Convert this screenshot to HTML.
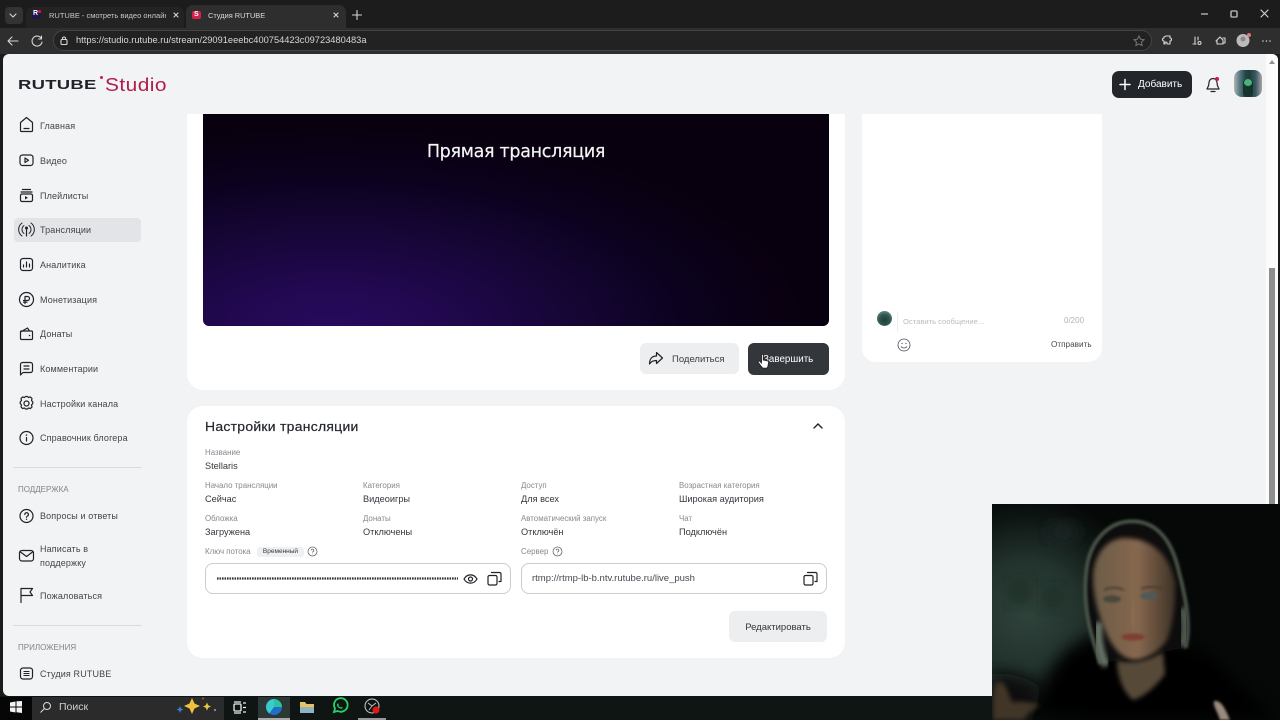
<!DOCTYPE html>
<html lang="ru"><head><meta charset="utf-8"><title>Студия RUTUBE</title>
<style>
*{box-sizing:border-box;margin:0;padding:0}
html,body{width:1280px;height:720px;overflow:hidden;background:#1b1b1b}
body{position:relative;font-family:"Liberation Sans","Noto Sans CJK SC",sans-serif;color:#22262b}
.a{position:absolute;white-space:nowrap}
svg{position:absolute;overflow:visible}
.i{fill:none;stroke:#1f2328;stroke-width:1.2;stroke-linecap:round;stroke-linejoin:round}
.nav{font-size:9px;color:#41464c;letter-spacing:.14px;line-height:12px}
.lb{font-size:7.900px;color:#85898f;line-height:10px}
.v{font-size:9.200px;color:#33383d;line-height:12px}
.w{fill:none;stroke:#d6d6d6;stroke-width:1.1;stroke-linecap:round;stroke-linejoin:round}
</style></head><body>

<!-- browser chrome -->
<div class="a" style="left:0;top:0;width:1280px;height:28px;background:#1c1c1c"></div>
<div class="a" style="left:0;top:28px;width:1280px;height:26px;background:#2e2e2e"></div>
<div class="a" style="left:5px;top:7px;width:18px;height:17px;background:#333;border-radius:4px"></div>
<svg style="left:0;top:0" width="30" height="28"><path d="M10 14l3 3 3-3" class="w"/></svg>
<div class="a" style="left:26px;top:7px;width:158px;height:21px;background:#232323;border-radius:6px 6px 0 0"></div>
<div class="a" style="left:32px;top:11px;width:8px;height:8px;background:#1d1650;border-radius:2px"></div>
<div class="a" style="left:33px;top:10px;font:bold 7px 'Liberation Sans';color:#fff">R</div>
<div class="a" style="left:38px;top:10px;width:3px;height:3px;background:#e0164f;border-radius:50%"></div>
<div class="a" style="left:49px;top:10px;width:117px;overflow:hidden;font-size:7.500px;line-height:11px;color:#c8c8c8">RUTUBE - смотреть видео онлайн</div>
<svg style="left:0;top:0" width="345" height="28"><path d="M174 13l4 4m0-4l-4 4" class="w"/><path d="M357 10.500v9M352.500 15h9" class="w"/></svg>
<div class="a" style="left:186px;top:5px;width:160px;height:23px;background:#2e2e2e;border-radius:7px 7px 0 0"></div>
<div class="a" style="left:192px;top:11px;width:9px;height:8px;background:#d3214f;border-radius:2px"></div>
<div class="a" style="left:194px;top:10.500px;font:bold 7px 'Liberation Sans';color:#fff">S</div>
<div class="a" style="left:208px;top:10px;font-size:7.400px;line-height:11px;color:#dcdcdc">Студия RUTUBE</div>
<svg style="left:0;top:0" width="345" height="28"><path d="M334 13l4 4m0-4l-4 4" class="w"/></svg>
<svg style="left:0;top:28px" width="70" height="26"><path d="M8 13h10M8 13l4-4M8 13l4 4" class="w"/><path d="M41 10a5 5 0 1 0 1 4M41.500 8v3h-3" class="w"/></svg>
<div class="a" style="left:53px;top:30px;width:1099px;height:21px;background:#222;border:1px solid #444;border-radius:11px"></div>
<svg style="left:60px;top:36px" width="10" height="10"><rect x="1" y="3.500" width="6" height="5" rx="1" class="w"/><path d="M2.500 3.500v-1a1.500 1.500 0 0 1 3 0v1" class="w"/></svg>
<div class="a" style="left:76px;top:34px;font-size:9.300px;line-height:13px;color:#d8d8d8">https://studio.rutube.ru/stream/29091eeebc400754423c09723480483a</div>
<svg style="left:1130px;top:0" width="150" height="54">
<path d="M9 36l1.600 3.200 3.400.5-2.500 2.400.6 3.400-3.100-1.600-3.100 1.600.6-3.400-2.500-2.400 3.400-.5z" style="fill:none;stroke:#777;stroke-width:1"/>
<path d="M36 36h4v2a1.500 1.500 0 0 1 0 3v3h-3v-1.500a1.500 1.500 0 0 0-2 0V44h-1v-3a1.500 1.500 0 0 1 0-3v-1z" class="w"/>
<path d="M65 37v6M68 37v3M63 44h3" class="w"/><circle cx="69.500" cy="43" r="1.500" class="w"/>
<path d="M86 41l4-4 3 3v4h-6v-3zM93 38h2v5h-2" class="w"/>
<circle cx="113" cy="40.500" r="6.500" fill="#bbb"/><circle cx="113" cy="39" r="2.500" fill="#888"/><circle cx="119" cy="35" r="2" fill="#d87a80"/>
<circle cx="133" cy="41" r=".8" fill="#ccc"/><circle cx="136.500" cy="41" r=".8" fill="#ccc"/><circle cx="140" cy="41" r=".8" fill="#ccc"/>
<path d="M71 14h7" style="stroke:#ddd;stroke-width:1.100"/><rect x="101" y="11" width="6" height="6" rx="1" style="fill:none;stroke:#aaa;stroke-width:1.600"/><path d="M131 10l7 7m0-7l-7 7" class="w"/>
</svg>

<!-- page -->
<div class="a" style="left:3px;top:54px;width:1275px;height:642px;background:#f2f3f5;border-radius:6px;overflow:hidden"></div>
<div class="a" style="left:1266px;top:54px;width:12px;height:450px;background:#fbfbfb;border-radius:0 6px 0 0"></div>
<svg style="left:1269px;top:59px" width="8" height="6"><path d="M3 1l3 4H0z" fill="#8f8f8f"/></svg>
<div class="a" style="left:1269px;top:268px;width:6px;height:236px;background:#8e8e8e"></div>

<!-- logo -->
<div class="a" style="left:18px;top:76px;font:bold 13px/18px 'Liberation Sans';color:#1f2328;letter-spacing:.2px;transform:scaleX(1.42);transform-origin:left">RUTUBE</div>
<div class="a" style="left:100px;top:76px;width:3px;height:3px;border-radius:50%;background:#d5144f"></div>
<div class="a" style="left:105px;top:75px;font:18px/21px 'Liberation Sans';color:#b01c4b;letter-spacing:.4px;transform:scaleX(1.16);transform-origin:left">Studio</div>

<!-- header right -->
<div class="a" style="left:1112px;top:71px;width:80px;height:27px;background:#22262b;border-radius:7px"></div>
<svg style="left:1112px;top:71px" width="80" height="27"><path d="M13 8.500v10M8 13.500h10" stroke="#fff" stroke-width="1.500" stroke-linecap="round"/></svg>
<div class="a" style="left:1138px;top:78px;font-size:10px;line-height:14px;color:#fff">Добавить</div>
<svg style="left:1205px;top:76px" width="16" height="18"><path d="M8 2.500a4 4 0 0 0-4 4c0 4-1.500 5-2 6.500h12c-.5-1.500-2-2.500-2-6.500a4 4 0 0 0-4-4zM6 15.500h4" class="i"/><circle cx="12" cy="3" r="2" fill="#d5144f"/></svg>
<div class="a" style="left:1234px;top:70px;width:28px;height:27px;border-radius:8px;background:linear-gradient(90deg,#b5b3ad 0,#5e7f88 18%,#27474a 40%,#1f3c38 55%,#3a5a66 78%,#a9a6a0 100%);overflow:hidden"><div class="a" style="left:9px;top:9px;width:10px;height:18px;background:#17342a;border-radius:4px"></div><div class="a" style="left:10px;top:9px;width:8px;height:7px;background:#47b27c;border-radius:50%"></div></div>

<!-- sidebar -->
<div class="a" style="left:14px;top:218px;width:127px;height:24px;background:#e2e4e7;border-radius:4px"></div>
<svg style="left:0;top:0" width="40" height="690">
<path class="i" d="M20.500 122.500l6-5 6 5v8a1 1 0 0 1-1 1h-10a1 1 0 0 1-1-1zM24 128.500h5"/>
<rect class="i" x="20" y="155" width="13" height="10.500" rx="2.500"/><path class="i" d="M25 158v4.500l3.500-2.200z"/>
<path class="i" d="M22.500 189.500h8M21 192h11"/><rect class="i" x="20.500" y="194" width="12" height="7.500" rx="1.500"/><path d="M25 196v3.500l3-1.700z" fill="#1f2328"/>
<path class="i" d="M24 225.500a5 5 0 0 0 0 8M29 225.500a5 5 0 0 1 0 8M22 223a8 8 0 0 0 0 13M31 223a8 8 0 0 1 0 13" style="stroke-width:1"/><path class="i" d="M26.500 229v7"/><circle cx="26.500" cy="228" r="1.500" fill="#1f2328"/>
<rect class="i" x="20.500" y="258.500" width="12" height="12" rx="2.500"/><path class="i" d="M23.500 267v-2M26.500 267v-5M29.500 267v-3"/>
<circle class="i" cx="26.500" cy="299.500" r="7"/><path class="i" d="M25 303.500v-7h2.500a2 2 0 0 1 0 4H23.500M23.500 302.200h3.500"/>
<path class="i" d="M20.500 332v6.500a1 1 0 0 0 1 1h10a1 1 0 0 0 1-1V332a1 1 0 0 0-1-1h-10a1 1 0 0 0-1 1l7-4 2 3"/><circle cx="29.500" cy="335.500" r=".8" fill="#1f2328"/>
<path class="i" d="M20.500 364.500a2 2 0 0 1 2-2h8a2 2 0 0 1 2 2v6a2 2 0 0 1-2 2h-7.500l-2.500 2.500zM24 366h5M24 369h5"/>
<circle class="i" cx="26.500" cy="403.500" r="2.500"/><path class="i" d="M24.500 397.500l1-1h2l1 1 2-.5 1.500 1.500-.5 2 1.300 1.500v1.500l-1.300 1.500.5 2-1.500 1.500-2-.5-1 1h-2l-1-1-2 .5-1.500-1.500.5-2-1.300-1.500v-1.500l1.300-1.500-.5-2 1.500-1.500z"/>
<circle class="i" cx="26.500" cy="438" r="6.500"/><path class="i" d="M26.500 437.500v3.500"/><circle cx="26.500" cy="435" r=".8" fill="#1f2328"/>
<circle class="i" cx="26.500" cy="516" r="6.500"/><path class="i" d="M24.800 514.500a1.800 1.800 0 1 1 2.600 1.600c-.6.300-.9.700-.9 1.200"/><circle cx="26.500" cy="519.300" r=".7" fill="#1f2328"/>
<rect class="i" x="19.500" y="550.500" width="14" height="10.500" rx="2.500"/><path class="i" d="M20.500 552l6 4.500 6-4.500"/>
<path class="i" d="M21 602.500v-14h11.500l-2.500 3.500 2.500 3.500H21"/>
<rect class="i" x="20.500" y="668" width="12" height="11" rx="2.500"/><path d="M23.500 671.500h6M23.500 673.500h6M23.500 675.500h6" stroke="#1f2328" stroke-width="1"/>
</svg>
<div class="a nav" style="left:40px;top:120px">Главная</div>
<div class="a nav" style="left:40px;top:155px">Видео</div>
<div class="a nav" style="left:40px;top:190px">Плейлисты</div>
<div class="a nav" style="left:40px;top:224px">Трансляции</div>
<div class="a nav" style="left:40px;top:259px">Аналитика</div>
<div class="a nav" style="left:40px;top:294px">Монетизация</div>
<div class="a nav" style="left:40px;top:328px">Донаты</div>
<div class="a nav" style="left:40px;top:363px">Комментарии</div>
<div class="a nav" style="left:40px;top:398px">Настройки канала</div>
<div class="a nav" style="left:40px;top:432px">Справочник блогера</div>
<div class="a" style="left:13px;top:467px;width:129px;height:1px;background:#d9dbde"></div>
<div class="a" style="left:18px;top:485px;font-size:8px;line-height:10px;color:#7e848a">ПОДДЕРЖКА</div>
<div class="a nav" style="left:40px;top:510px">Вопросы и ответы</div>
<div class="a nav" style="left:40px;top:543px;line-height:13.500px">Написать в<br>поддержку</div>
<div class="a nav" style="left:40px;top:590px">Пожаловаться</div>
<div class="a" style="left:13px;top:625px;width:129px;height:1px;background:#d9dbde"></div>
<div class="a" style="left:18px;top:643px;font-size:8px;line-height:10px;color:#7e848a">ПРИЛОЖЕНИЯ</div>
<div class="a nav" style="left:40px;top:668px">Студия RUTUBE</div>

<!-- main card -->
<div class="a" style="left:187px;top:114px;width:658px;height:276px;background:#fff;border-radius:0 0 16px 16px"></div>
<div class="a" style="left:203px;top:114px;width:626px;height:212px;border-radius:0 0 6px 6px;background:radial-gradient(ellipse 470px 200px at 130px 215px,#270a5e 0,#220850 22%,#170638 48%,#0c0220 74%,rgba(9,0,19,0) 100%),#09000f"></div>
<div class="a" style="left:203px;top:142px;width:626px;text-align:center;font:17.500px/20px 'DejaVu Sans','Liberation Sans',sans-serif;color:#f5f5f5;letter-spacing:-.3px;-webkit-text-stroke:.2px #f5f5f5"><span style="display:inline-block;transform:scaleX(1)">Прямая трансляция</span></div>
<div class="a" style="left:640px;top:343px;width:99px;height:31px;background:#eceef0;border-radius:6px"></div>
<svg style="left:648px;top:351px" width="16" height="15"><path class="i" d="M8.500 1.500l6 5.500-6 5.500V9.500C5 9.500 3 10.500 1.500 13c0-4.500 2-8 7-8z"/></svg>
<div class="a" style="left:672px;top:353px;font-size:9.500px;line-height:13px;color:#3a3f45">Поделиться</div>
<div class="a" style="left:748px;top:343px;width:81px;height:32px;background:#33363b;border-radius:6px"></div>
<div class="a" style="left:763px;top:353px;font-size:9.800px;line-height:13px;color:#fff">Завершить</div>
<svg style="left:757px;top:353px" width="13" height="17"><path d="M4.500 2.200c0-1.300 1.800-1.300 1.800 0V7l4 .8c1 .2 1.500 1 1.300 2l-.8 4c-.2.900-.8 1.400-1.700 1.400H6.500c-.7 0-1.200-.3-1.600-.9L1.300 9.500c-.8-1.100.6-2.200 1.500-1.200l1.700 1.600z" fill="#fff" stroke="#222" stroke-width=".9"/></svg>

<!-- chat card -->
<div class="a" style="left:862px;top:114px;width:240px;height:248px;background:#fff;border-radius:0 0 14px 14px"></div>
<div class="a" style="left:877px;top:311px;width:15px;height:15px;border-radius:50%;background:radial-gradient(circle at 50% 60%,#213d37 0,#2f5751 45%,#8aa5a1 100%)"></div>
<div class="a" style="left:897px;top:312px;width:1px;height:20px;background:#eceef0"></div>
<div class="a" style="left:903px;top:317px;font-size:7.600px;line-height:10px;color:#b9bdc2">Оставить сообщение...</div>
<div class="a" style="left:1064px;top:316px;font-size:8px;line-height:10px;color:#b0b4b9">0/200</div>
<svg style="left:897px;top:338px" width="14" height="14"><circle cx="7" cy="7" r="6" fill="none" stroke="#44494f" stroke-width=".8"/><circle cx="5" cy="5.500" r=".6" fill="#44494f"/><circle cx="9" cy="5.500" r=".6" fill="#44494f"/><path d="M4 8.500c1.500 2 4.500 2 6 0" fill="none" stroke="#44494f" stroke-width=".8"/></svg>
<div class="a" style="left:1051px;top:339px;font-size:8.200px;line-height:12px;color:#44494f">Отправить</div>

<!-- settings card -->
<div class="a" style="left:187px;top:406px;width:658px;height:252px;background:#fff;border-radius:16px"></div>
<div class="a" style="left:205px;top:420px;font-size:12.500px;line-height:15px;color:#22262b;letter-spacing:.25px;-webkit-text-stroke:.2px #22262b;transform:scaleX(1.115);transform-origin:left">Настройки трансляции</div>
<svg style="left:812px;top:421px" width="12" height="10"><path d="M2 7l4-4 4 4" fill="none" stroke="#1f2328" stroke-width="1.400" stroke-linecap="round"/></svg>

<div class="a lb" style="left:205px;top:448px">Название</div><div class="a v" style="left:205px;top:460px">Stellaris</div>
<div class="a lb" style="left:205px;top:481px">Начало трансляции</div><div class="a v" style="left:205px;top:493px">Сейчас</div>
<div class="a lb" style="left:363px;top:481px">Категория</div><div class="a v" style="left:363px;top:493px">Видеоигры</div>
<div class="a lb" style="left:521px;top:481px">Доступ</div><div class="a v" style="left:521px;top:493px">Для всех</div>
<div class="a lb" style="left:679px;top:481px">Возрастная категория</div><div class="a v" style="left:679px;top:493px">Широкая аудитория</div>
<div class="a lb" style="left:205px;top:514px">Обложка</div><div class="a v" style="left:205px;top:526px">Загружена</div>
<div class="a lb" style="left:363px;top:514px">Донаты</div><div class="a v" style="left:363px;top:526px">Отключены</div>
<div class="a lb" style="left:521px;top:514px">Автоматический запуск</div><div class="a v" style="left:521px;top:526px">Отключён</div>
<div class="a lb" style="left:679px;top:514px">Чат</div><div class="a v" style="left:679px;top:526px">Подключён</div>
<div class="a lb" style="left:205px;top:547px">Ключ потока</div>
<div class="a" style="left:257px;top:547px;width:47px;height:10px;background:#eff0f2;border-radius:3px;font-size:6.500px;line-height:10px;text-align:center;color:#33383d">Временный</div>
<svg style="left:307px;top:546px" width="11" height="11"><circle cx="5.500" cy="5.500" r="4.500" fill="none" stroke="#666" stroke-width=".8"/><path d="M4.200 4.400a1.300 1.300 0 1 1 1.900 1.200c-.4.200-.6.500-.6.900" fill="none" stroke="#666" stroke-width=".8"/><circle cx="5.500" cy="8" r=".4" fill="#666"/></svg>
<div class="a lb" style="left:521px;top:547px">Сервер</div>
<svg style="left:552px;top:546px" width="11" height="11"><circle cx="5.500" cy="5.500" r="4.500" fill="none" stroke="#666" stroke-width=".8"/><path d="M4.200 4.400a1.300 1.300 0 1 1 1.900 1.200c-.4.200-.6.500-.6.900" fill="none" stroke="#666" stroke-width=".8"/><circle cx="5.500" cy="8" r=".4" fill="#666"/></svg>

<div class="a" style="left:205px;top:563px;width:306px;height:31px;border:1px solid #c9ccd0;border-radius:8px"></div>
<svg style="left:216px;top:577px" width="243" height="3"><line x1="1" y1="1.500" x2="242" y2="1.500" stroke="#2f3338" stroke-width="2.300" stroke-dasharray="1.600 .9"/></svg>
<svg style="left:463px;top:572px" width="15" height="14"><path class="i" d="M1 7c3-5.500 10-5.500 13 0-3 5.500-10 5.500-13 0z"/><circle class="i" cx="7.500" cy="7" r="2"/></svg>
<svg style="left:487px;top:571px" width="15" height="15"><rect class="i" x="1" y="4.500" width="9" height="9.500" rx="1.500"/><path class="i" d="M4.500 1.500h8a1.500 1.500 0 0 1 1.500 1.500v7.500h-2"/></svg>
<div class="a" style="left:521px;top:563px;width:306px;height:31px;border:1px solid #c9ccd0;border-radius:8px"></div>
<div class="a" style="left:532px;top:573px;font-size:9.500px;line-height:12px;color:#44494f">rtmp://rtmp-lb-b.ntv.rutube.ru/live_push</div>
<svg style="left:803px;top:571px" width="15" height="15"><rect class="i" x="1" y="4.500" width="9" height="9.500" rx="1.500"/><path class="i" d="M4.500 1.500h8a1.500 1.500 0 0 1 1.500 1.500v7.500h-2"/></svg>
<div class="a" style="left:729px;top:611px;width:98px;height:31px;background:#eceef0;border-radius:6px;font-size:9.500px;line-height:31px;padding-top:1px;text-align:center;color:#33383d">Редактировать</div>

<!-- taskbar -->
<div class="a" style="left:0;top:696px;width:1280px;height:24px;background:#0f1513"></div>
<div class="a" style="left:0;top:697px;width:32px;height:23px;background:#060606"></div>
<svg style="left:10px;top:701px" width="13" height="12"><path d="M0 1.500l5.500-1V5.500H0zM6.500.3L12 0v5.500H6.500zM0 6.500h5.500v5L0 10.500zM6.500 6.500H12V12l-5.500-.8z" fill="#f2f2f2"/></svg>
<div class="a" style="left:32px;top:697px;width:192px;height:23px;background:#2b2b2b"></div>
<svg style="left:39px;top:701px" width="14" height="13"><circle cx="8" cy="5" r="3.500" fill="none" stroke="#ddd" stroke-width="1"/><path d="M5.500 7.500L1.500 11.500" stroke="#ddd" stroke-width="1"/></svg>
<div class="a" style="left:59px;top:700px;font-size:10.500px;line-height:14px;color:#cfcfcf">Поиск</div>
<svg style="left:176px;top:697px" width="44" height="20"><path d="M16 1l2.500 5.500L24 9l-5.500 2.500L16 17l-2.500-5.500L8 9l5.500-2.500z" fill="#eec23c"/><path d="M31 5.500l1.200 2.800 2.800 1.200-2.800 1.200L31 13.500l-1.200-2.800L27 9.500l2.800-1.200z" fill="#e7c83f"/><path d="M4 9l1 2.500L7.500 12.500 5 13.500 4 16l-1-2.500L.5 12.500 3 11.500z" fill="#3c7fd0"/><circle cx="39" cy="13" r="1" fill="#9aa"/><circle cx="27" cy="1.500" r="1" fill="#c0502a"/></svg>
<svg style="left:233px;top:701px" width="14" height="13"><rect x="1" y="3" width="7" height="7" rx="1" fill="none" stroke="#eee" stroke-width="1.300"/><path d="M10 2h3M10 6.500h3M10 11h3M1 1h7M1 12h7" stroke="#eee" stroke-width="1.300"/></svg>
<div class="a" style="left:258px;top:697px;width:32px;height:23px;background:#2c3836"></div>
<div class="a" style="left:266px;top:699px;width:16px;height:16px;border-radius:50%;background:conic-gradient(#2dc3a0 0 25%,#1f6fc9 25% 60%,#3acad0 60% 100%)"></div>
<svg style="left:299px;top:699px" width="16" height="16"><path d="M1 3h5l1.500 2H15v9H1z" fill="#e7c45f"/><rect x="1" y="8" width="14" height="6" fill="#8fb3c5"/></svg>
<svg style="left:331px;top:698px" width="17" height="17"><path d="M3 14l1-3.500a6.800 6.800 0 1 1 2.700 2.500z" fill="none" stroke="#25d366" stroke-width="1.800"/><path d="M6.300 6c.5-1 1-.9 1.400.3.200.7-.6.800-.3 1.300.5.800 1.300 1.500 2 1.800.4.200.7-.7 1.300-.4 1.200.5 1.300 1 .3 1.500-2.300 1-6.300-2.500-4.700-4.500z" fill="#25d366"/></svg>
<svg style="left:363px;top:697px" width="20" height="20"><circle cx="9" cy="9" r="7" fill="none" stroke="#cfcfcf" stroke-width="1"/><path d="M5 6l4 3-3 4M9 9l4-3" fill="none" stroke="#cfcfcf" stroke-width=".8"/><circle cx="13" cy="13" r="3.500" fill="#e01818"/></svg>
<div class="a" style="left:358px;top:718px;width:28px;height:2px;background:#999"></div>
<div class="a" style="left:258px;top:718px;width:32px;height:2px;background:#aaa"></div>

<!-- webcam -->
<div class="a" style="left:992px;top:504px;width:288px;height:216px;background:#050706;overflow:hidden">
<svg style="left:0;top:0;overflow:hidden" width="288" height="216" viewBox="0 0 288 216">
<defs>
<filter id="b" x="-30%" y="-30%" width="160%" height="160%"><feGaussianBlur stdDeviation="2.500"/></filter>
<filter id="e" x="-30%" y="-30%" width="160%" height="160%"><feGaussianBlur stdDeviation="8"/></filter>
<filter id="d" x="-50%" y="-50%" width="200%" height="200%"><feGaussianBlur stdDeviation="1.300"/></filter>
<radialGradient id="g" gradientUnits="userSpaceOnUse" cx="35" cy="110" r="120"><stop offset="0" stop-color="#2f433b"/><stop offset=".45" stop-color="#22322c"/><stop offset=".85" stop-color="#0b1210"/><stop offset="1" stop-color="#060808"/></radialGradient>
<linearGradient id="f" x1="0" y1="0" x2="1" y2="0"><stop offset="0" stop-color="#6b5c46"/><stop offset=".55" stop-color="#86674f"/><stop offset="1" stop-color="#3c3226"/></linearGradient>
</defs>
<rect width="288" height="216" fill="url(#g)"/>
<ellipse cx="71" cy="28" rx="16" ry="9" fill="#1d2825" filter="url(#e)"/>
<ellipse cx="28" cy="88" rx="11" ry="13" fill="#1f2d28" filter="url(#e)"/>
<ellipse cx="60" cy="94" rx="10" ry="12" fill="#1f2d28" filter="url(#e)"/>
<path d="M40 216C55 160 75 135 112 130L210 145C240 170 260 190 288 216z" fill="#040505" filter="url(#e)"/>
<path d="M0 216V170c20-2 35 4 50 14l-10 32z" fill="#0c100e" filter="url(#e)"/>
<path d="M108 160C100 135 90 105 94 68 97 35 118 17 140 17c24 0 40 18 47 50 8 30 12 55 7 77" fill="#070807" stroke="#4f5a4e" stroke-width="3" filter="url(#d)"/>
<path d="M114 162c-6-14-9-26-7-44" fill="none" stroke="#69746a" stroke-width="8" filter="url(#b)"/>
<path d="M190 142c4-12 4-24 0-38" fill="none" stroke="#4f5c50" stroke-width="8" filter="url(#b)"/>
<path d="M101 72c1-22 14-38 32-38 26 0 44 16 50 44 1 20-2 42-8 58-10 14-22 20-34 20-14-2-24-18-30-34-6-16-10-32-10-50z" fill="url(#f)" filter="url(#b)"/>
<path d="M125 156c12 4 28 2 46-8l2 22c-6 8-18 22-32 26-10-8-16-24-16-40z" fill="#574a37" filter="url(#b)"/>
<ellipse cx="120" cy="95" rx="9" ry="3.500" fill="#46463a" filter="url(#d)"/><ellipse cx="157" cy="92" rx="9" ry="3.500" fill="#4d5a58" filter="url(#d)"/>
<path d="M112 86c6-3 13-3 20 0M149 85c7-3 15-3 22 0" stroke="#4a3e2d" stroke-width="2" fill="none" filter="url(#d)"/>
<path d="M141 100c1 8 1 14-1 22" stroke="#9c7a60" stroke-width="7" fill="none" filter="url(#e)"/>
<ellipse cx="141" cy="133" rx="12" ry="3.500" fill="#7d3f33" filter="url(#d)"/>
<path d="M1 216c0-18-1-36 5-38 6-2 10 8 14 20 8-1 18 0 28 3-8 5-12 8-16 15z" fill="#3f3526" filter="url(#b)"/>
<path d="M222 197c7-1 11 7 16 19h-10c-2-8-7-13-6-19z" fill="#9b8a7d" filter="url(#d)"/>
</svg>
</div>
</body></html>
